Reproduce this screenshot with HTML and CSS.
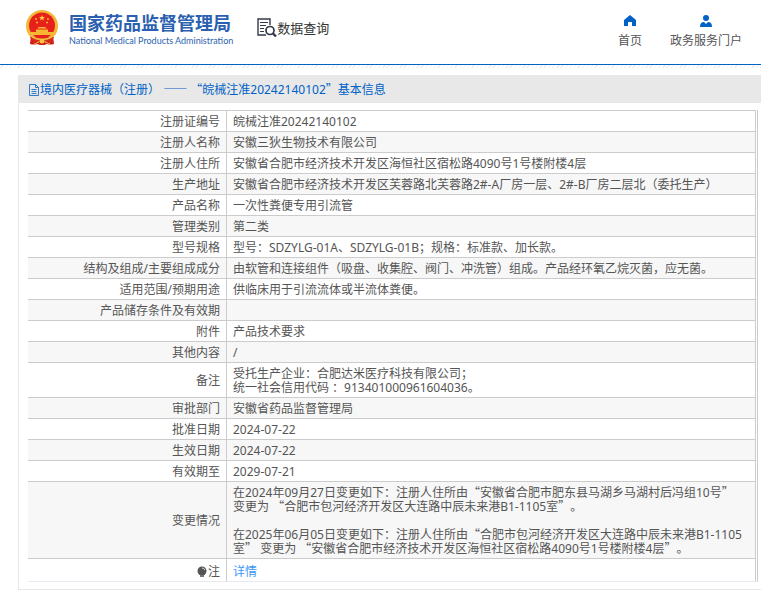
FILE: index.html
```html
<!DOCTYPE html>
<html lang="zh-CN">
<head>
<meta charset="UTF-8">
<title>国家药品监督管理局 数据查询</title>
<link rel="stylesheet" href="styles.css">
</head>
<body>

<header class="header">
    <a class="logo" href="#">
        <svg class="emblem" viewBox="0 0 32 36">
            <path d="M5 25 L4 34 Q8 35 11 34 L14 35 H18 L21 34 Q24 35 28 34 L27 25 Z" fill="#cf1f1a"/>
            <circle cx="16" cy="16" r="16" fill="#f0b93a"/>
            <path d="M4 27 L7 32 L12 31 L16 33 L20 31 L25 32 L28 27 Z" fill="#d9281c"/>
            <circle cx="16" cy="15.500" r="13" fill="#e8201c"/>
            <path d="M16 5 l.8 2 h2.200 l-1.700 1.400 .6 2.100 -1.900 -1.200 -1.900 1.200 .6 -2.100 -1.700 -1.400 h2.200 z" fill="#fbd23c"/>
            <g fill="#f7b733">
                <circle cx="10" cy="9" r="1"/><circle cx="22" cy="9" r="1"/>
                <circle cx="11" cy="12.500" r="1"/><circle cx="21" cy="12.500" r="1"/>
                <path d="M11 18.500 L13 17 H19 L21 18.500 Z"/>
                <path d="M10 19.500 H22 V22 H27 V25 H5 V22 H10 Z"/>
            </g>
            <path d="M6 27 Q16 32 26 27" stroke="#f0b93a" stroke-width="1.500" fill="none"/>
            <circle cx="16" cy="31" r="2.500" fill="#f6c544"/>
            <path d="M8 34 L13 32 M24 34 L19 32" stroke="#f0b93a" stroke-width="1"/>
        </svg>
        <span class="logo-text">
            <span class="logo-cn">国家药品监督管理局</span>
            <span class="logo-en">National Medical Products Administration</span>
        </span>
    </a>
    <a class="query" href="#">
        <svg class="query-icon" viewBox="0 0 20 20" fill="none" stroke="#33384a">
            <path d="M9 17 H1 V1 H13 V7" stroke-width="1.400"/>
            <path d="M3 4.500 H11 M3 7.500 H9 M3 10.500 H7 M3 13.500 H7" stroke-width="1.200"/>
            <circle cx="13" cy="12.500" r="4" stroke-width="1.700"/>
            <path d="M16 15.500 L19 18.500" stroke-width="2.400"/>
        </svg>
        <span>数据查询</span>
    </a>
    <nav class="nav">
        <a href="#">
            <svg viewBox="0 0 12 12" fill="#0061c6"><path d="M6 0 L12 5 V11 H8 V7 H4 V11 H0 V5 Z"/></svg>
            <span>首页</span>
        </a>
        <a href="#">
            <svg viewBox="0 0 12 12" fill="#0061c6"><circle cx="6" cy="3" r="3"/><path d="M0 12 Q0 7 4 7 L6 9 L8 7 Q12 7 12 12 Z"/></svg>
            <span>政务服务门户</span>
        </a>
    </nav>
</header>
<div class="hatch"></div>

<main class="panel">
    <h1 class="panel-title">
        <svg class="doc-icon" viewBox="0 0 10 12" fill="none" stroke="#0061c6">
            <path stroke-width=".8" d="M.5 .5 H6.500 L9.500 3.500 V11.500 H.5 Z M6.500 .5 V3.500 H9.500 M2.500 5.500 H7.500 M2.500 7.500 H7.500 M2.500 9.500 H7.500"/>
        </svg>
        <span>境内医疗器械（注册） <span class="zh">——</span> <span class="zh">“</span>皖械注准20242140102<span class="zh">”</span>基本信息</span>
    </h1>

    <div class="table-box">
        <table class="info">
            <tr><th scope="row">注册证编号</th><td>皖械注准20242140102</td></tr>
            <tr><th scope="row">注册人名称</th><td>安徽三狄生物技术有限公司</td></tr>
            <tr><th scope="row">注册人住所</th><td>安徽省合肥市经济技术开发区海恒社区宿松路4090号1号楼附楼4层</td></tr>
            <tr><th scope="row">生产地址</th><td>安徽省合肥市经济技术开发区芙蓉路北芙蓉路2#-A厂房一层、2#-B厂房二层北（委托生产）</td></tr>
            <tr><th scope="row">产品名称</th><td>一次性粪便专用引流管</td></tr>
            <tr><th scope="row">管理类别</th><td>第二类</td></tr>
            <tr><th scope="row">型号规格</th><td>型号：SDZYLG-01A、SDZYLG-01B；规格：标准款、加长款。</td></tr>
            <tr><th scope="row">结构及组成/主要组成成分</th><td>由软管和连接组件（吸盘、收集腔、阀门、冲洗管）组成。产品经环氧乙烷灭菌，应无菌。</td></tr>
            <tr><th scope="row">适用范围/预期用途</th><td>供临床用于引流流体或半流体粪便。</td></tr>
            <tr><th scope="row">产品储存条件及有效期</th><td></td></tr>
            <tr><th scope="row">附件</th><td>产品技术要求</td></tr>
            <tr><th scope="row">其他内容</th><td>/</td></tr>
            <tr><th scope="row">备注</th><td>受托生产企业：合肥达米医疗科技有限公司；<br>统一社会信用代码 ：913401000961604036。</td></tr>
            <tr><th scope="row">审批部门</th><td>安徽省药品监督管理局</td></tr>
            <tr><th scope="row">批准日期</th><td>2024-07-22</td></tr>
            <tr><th scope="row">生效日期</th><td>2024-07-22</td></tr>
            <tr><th scope="row">有效期至</th><td>2029-07-21</td></tr>
            <tr>
                <th scope="row">变更情况</th>
                <td>在2024年09月27日变更如下：注册人住所由<span class="zh">“</span>安徽省合肥市肥东县马湖乡马湖村后冯组10号<span class="zh">”</span><br>变更为 <span class="zh">“</span>合肥市包河经济开发区大连路中辰未来港B1-1105室<span class="zh">”</span>。<br><br>在2025年06月05日变更如下：注册人住所由<span class="zh">“</span>合肥市包河经济开发区大连路中辰未来港B1-1105<br>室<span class="zh">”</span> 变更为 <span class="zh">“</span>安徽省合肥市经济技术开发区海恒社区宿松路4090号1号楼附楼4层<span class="zh">”</span>。</td>
            </tr>
            <tr>
                <th scope="row"><svg class="bulb" viewBox="0 0 10 12"><circle cx="5" cy="5" r="4.500" fill="#555"/><path d="M3 9 H7 V11 H3 Z" fill="#777"/><path d="M5 2 Q7 2 8 4" stroke="#ddd" fill="none"/></svg>注</th>
                <td><a href="#">详情</a></td>
            </tr>
        </table>
    </div>
</main>

</body>
</html>
```

FILE: styles.css
```css
body {
    margin: 0;
    font-family: "Noto Sans", "Noto Sans CJK SC", sans-serif;
    font-size: 12px;
    line-height: 14px;
    text-spacing-trim: space-all;
    color: #555;
    background: #fff;
}
a {
    text-decoration: none;
    color: inherit;
}
/* full-width quotes and dashes */
.zh {
    font-family: "Noto Sans CJK SC", sans-serif;
    line-height: 0;
}

/* header */
.header {
    display: flex;
    align-items: flex-start;
    box-sizing: border-box;
    height: 65px;
    padding: 0 19px 0 26px;
    border-bottom: 1px solid #0061c6;
}
.hatch {
    height: 3px;
    background: repeating-linear-gradient(135deg, #fff 0 2px, #eee 2px 3px);
}
.logo {
    display: flex;
    gap: 11px;
    padding-top: 10px;
    color: #2b5fb0;
}
.emblem {
    width: 32px;
    height: 36px;
}
.logo-text {
    display: flex;
    flex-direction: column;
    white-space: nowrap;
}
.logo-cn {
    font-size: 18px;
    line-height: 26px;
    font-weight: bold;
}
.logo-en {
    font-family: Lato, sans-serif;
    font-size: 9px;
    line-height: 10px;
}
.query {
    display: flex;
    align-items: center;
    padding-top: 18px;
    margin-left: 24px;
    font-size: 13px;
    line-height: 20px;
    color: #333;
}
.query-icon {
    width: 20px;
    height: 20px;
}
.nav {
    display: flex;
    gap: 28px;
    margin-left: auto;
    padding-top: 15px;
    color: #555;
}
.nav a {
    display: flex;
    flex-direction: column;
    align-items: center;
    gap: 6px;
    line-height: 16px;
}
.nav svg {
    width: 12px;
    height: 12px;
}

/* detail panel */
.panel {
    margin: 7px 0 0 18px;
    border-left: 1px solid #e8e8e8;
    border-bottom: 1px solid #e8e8e8;
    padding-bottom: 7px;
}
.panel-title {
    display: flex;
    align-items: center;
    box-sizing: border-box;
    margin: 0;
    height: 28px;
    padding: 2px 0 0 10px;
    background: #e8e8e8;
    font-size: 12px;
    font-weight: normal;
    color: #0061c6;
}
.doc-icon {
    width: 10px;
    height: 12px;
    margin-right: 1px;
}
.table-box {
    margin: 7px 3px 0 9px;
    padding-right: 1px;
    border-right: 1px solid #ccc;
}
.info {
    width: 100%;
    border-collapse: separate;
    border-spacing: 0;
    border-right: 1px solid #ccc;
    border-bottom: 1px solid #e8e8f0;
}
.info th,
.info td {
    height: 14px;
    padding: 4px 6px 2px;
    border-top: 1px solid #ccc;
    font-weight: normal;
}
.info th {
    width: 186px;
    text-align: right;
    border-right: 1px solid #ccc;
}
.info td {
    text-align: left;
}
.info tr:nth-child(even) {
    background: #f7f7f7;
}
.info tr:last-child th,
.info tr:last-child td {
    padding: 6px 6px 2px;
}
.info a {
    color: #3a96f5;
}
.bulb {
    width: 10px;
    height: 12px;
    margin-right: 1px;
    vertical-align: -2px;
}
```
